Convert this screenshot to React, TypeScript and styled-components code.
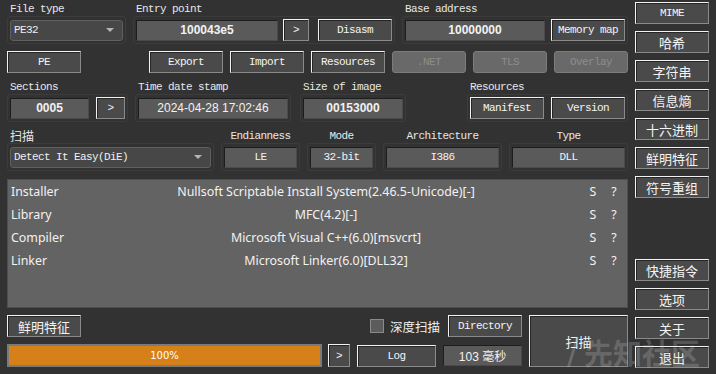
import React from 'react';
import styled, { createGlobalStyle } from 'styled-components';

const GlobalStyle = createGlobalStyle`
  html, body {
    margin: 0;
    padding: 0;
    background: #323232;
  }
`;

const MONO = `"Liberation Mono", "Noto Sans CJK SC", monospace`;
const SANS = `"Noto Sans", "Noto Sans CJK SC", sans-serif`;
const CJK = `"Noto Sans CJK SC", "Noto Sans", sans-serif`;

const Window = styled.div`
  position: relative;
  width: 716px;
  height: 374px;
  box-sizing: border-box;
  padding-left: 7px;
  display: flex;
  gap: 7px;
  background: #323232;
  overflow: hidden;
  color: #ececec;
`;

const Main = styled.div`
  width: 621px;
  padding-top: 2px;
  display: flex;
  flex-direction: column;
`;

const Side = styled.div`
  width: 74px;
  box-sizing: border-box;
  padding: 2px 0 6px;
  display: flex;
  flex-direction: column;
  justify-content: space-between;
`;

const SideGroup = styled.div`
  display: flex;
  flex-direction: column;
  gap: 7px;
`;

const Row = styled.div<{ $top?: number }>`
  display: flex;
  align-items: flex-start;
  margin-top: ${p => p.$top ?? 0}px;
`;

const Stack = styled.div<{ $left?: number }>`
  display: flex;
  flex-direction: column;
  margin-left: ${p => p.$left ?? 0}px;
`;

const Caption = styled.div<{ $center?: boolean }>`
  height: 14px;
  line-height: 14px;
  padding-left: ${p => (p.$center ? 0 : 3)}px;
  text-align: ${p => (p.$center ? 'center' : 'left')};
  font-family: ${MONO};
  font-size: 11px;
  letter-spacing: -0.6px;
  color: #e8e8e8;
  white-space: nowrap;
`;

const CjkCaption = styled(Caption)`
  font-family: ${CJK};
  font-size: 12px;
  letter-spacing: 0;
`;

const Group = styled.div`
  display: flex;
  align-items: center;
  border: 1px solid #3c3c3c;
  border-radius: 3px;
  padding: 2px;
  height: 22px;
`;

const Field = styled.div<{ $w: number; $bold?: boolean; $mono?: boolean; $ml?: number }>`
  width: ${p => p.$w}px;
  height: 21px;
  box-sizing: border-box;
  margin-left: ${p => p.$ml ?? 0}px;
  background: #5a5a5a;
  border: 1px solid #1d1d1d;
  border-right-color: #4a4a4a;
  border-bottom-color: #4a4a4a;
  display: flex;
  align-items: center;
  justify-content: center;
  color: #f2f2f2;
  white-space: nowrap;
  font-family: ${p => (p.$mono ? MONO : `"Liberation Sans", "Noto Sans CJK SC", sans-serif`)};
  font-size: ${p => (p.$mono ? 11 : 12)}px;
  letter-spacing: ${p => (p.$mono ? -0.6 : 0)}px;
  font-weight: ${p => (p.$bold ? 700 : 400)};
`;

const Btn = styled.div<{ $w?: number; $h?: number; $ml?: number; $cjk?: boolean }>`
  width: ${p => p.$w ?? 74}px;
  height: ${p => p.$h ?? 22}px;
  margin-left: ${p => p.$ml ?? 0}px;
  box-sizing: border-box;
  flex-shrink: 0;
  background: #4a4a4a;
  border: 1px solid #f2f2f2;
  border-right-color: #8a8a8a;
  border-bottom-color: #8a8a8a;
  box-shadow: inset 1px 1px 0 #262626;
  display: flex;
  align-items: center;
  justify-content: center;
  color: #f4f4f4;
  white-space: nowrap;
  font-family: ${p => (p.$cjk ? CJK : MONO)};
  font-size: ${p => (p.$cjk ? 13 : 11)}px;
  letter-spacing: ${p => (p.$cjk ? 0 : -0.6)}px;
`;

const DisabledBtn = styled.div<{ $ml?: number }>`
  width: 74px;
  height: 22px;
  margin-left: ${p => p.$ml ?? 0}px;
  box-sizing: border-box;
  background: #696969;
  border: 1px solid #7c7c7c;
  border-radius: 3px;
  display: flex;
  align-items: center;
  justify-content: center;
  color: #8d8d8d;
  font-family: ${MONO};
  font-size: 11px;
  letter-spacing: -0.6px;
`;

const Combo = styled.div<{ $w: number }>`
  width: ${p => p.$w}px;
  height: 21px;
  box-sizing: border-box;
  background: #474747;
  border: 1px solid #5f5f5f;
  border-radius: 3px;
  display: flex;
  align-items: center;
  justify-content: space-between;
  padding: 0 8px 0 3px;
  font-family: ${MONO};
  font-size: 11px;
  letter-spacing: -0.6px;
  color: #f0f0f0;
  white-space: nowrap;
`;

const Arrow = styled.span`
  width: 0;
  height: 0;
  border-left: 4px solid transparent;
  border-right: 4px solid transparent;
  border-top: 4px solid #b5b5b5;
`;

const Panel = styled.div`
  margin-top: 8px;
  height: 129px;
  box-sizing: border-box;
  background: #636363;
  border: 1px solid #4e4e4e;
  padding: 0 0 0 3px;
`;

const ResultRow = styled.div`
  display: grid;
  grid-template-columns: 60px 510px 24px 18px;
  height: 23px;
  align-items: center;
  font-family: ${SANS};
  font-size: 12.4px;
  color: #f2f2f2;
  white-space: nowrap;
`;

const Cell = styled.span<{ $center?: boolean }>`
  text-align: ${p => (p.$center ? 'center' : 'left')};
`;

const Bottom = styled.div`
  display: flex;
  margin-top: 7px;
`;

const BottomLeft = styled.div`
  width: 515px;
  display: flex;
  flex-direction: column;
  gap: 7px;
`;

const BottomRow = styled.div`
  display: flex;
  align-items: center;
`;

const Check = styled.span`
  width: 14px;
  height: 14px;
  box-sizing: border-box;
  margin-left: auto;
  background: #5c5c5c;
  border: 1px solid #8a8a8a;
`;

const CheckLabel = styled.span`
  margin-left: 6px;
  font-family: ${CJK};
  font-size: 12.5px;
  color: #f0f0f0;
`;

const Progress = styled.div`
  width: 315px;
  height: 23px;
  box-sizing: border-box;
  border: 2px solid #7a7a7a;
  background: #d6801a;
  display: flex;
  align-items: center;
  justify-content: center;
  font-family: "DejaVu Sans", sans-serif;
  font-size: 10px;
  color: #ffffff;
`;

const Watermark = styled.div`
  position: absolute;
  right: 16px;
  bottom: 1px;
  display: flex;
  align-items: center;
  gap: 2px;
  pointer-events: none;
  color: rgba(210, 210, 210, 0.24);
  font-family: ${CJK};
  font-size: 29px;
  font-weight: 700;
`;

const results = [
  ['Installer', 'Nullsoft Scriptable Install System(2.46.5-Unicode)[-]'],
  ['Library', 'MFC(4.2)[-]'],
  ['Compiler', 'Microsoft Visual C++(6.0)[msvcrt]'],
  ['Linker', 'Microsoft Linker(6.0)[DLL32]'],
];

const sideTop = ['MIME', '哈希', '字符串', '信息熵', '十六进制', '鲜明特征', '符号重组'];
const sideBottom = ['快捷指令', '选项', '关于', '退出'];

export default function App() {
  return (
    <Window>
      <GlobalStyle />
      <Main>
        <Row>
          <Stack>
            <Caption>File type</Caption>
            <Group>
              <Combo $w={113}>
                PE32
                <Arrow />
              </Combo>
            </Group>
          </Stack>
          <Stack $left={7}>
            <Caption>Entry point</Caption>
            <Group>
              <Field $w={142} $bold>100043e5</Field>
              <Btn $w={26} $ml={5}>&gt;</Btn>
              <Btn $ml={9}>Disasm</Btn>
            </Group>
          </Stack>
          <Stack $left={7}>
            <Caption>Base address</Caption>
            <Group>
              <Field $w={140} $bold>10000000</Field>
              <Btn $ml={6}>Memory map</Btn>
            </Group>
          </Stack>
        </Row>

        <Row $top={7}>
          <Btn>PE</Btn>
          <Btn $ml={68}>Export</Btn>
          <Btn $ml={7}>Import</Btn>
          <Btn $ml={7}>Resources</Btn>
          <DisabledBtn $ml={7}>.NET</DisabledBtn>
          <DisabledBtn $ml={7}>TLS</DisabledBtn>
          <DisabledBtn $ml={7}>Overlay</DisabledBtn>
        </Row>

        <Row $top={7}>
          <Stack>
            <Caption>Sections</Caption>
            <Group>
              <Field $w={79} $bold>0005</Field>
              <Btn $w={29} $ml={7}>&gt;</Btn>
            </Group>
          </Stack>
          <Stack $left={7}>
            <Caption>Time date stamp</Caption>
            <Group>
              <Field $w={150}>2024-04-28 17:02:46</Field>
            </Group>
          </Stack>
          <Stack $left={9}>
            <Caption>Size of image</Caption>
            <Group>
              <Field $w={100} $bold>00153000</Field>
            </Group>
          </Stack>
          <Stack $left={61}>
            <Caption>Resources</Caption>
            <Group>
              <Btn>Manifest</Btn>
              <Btn $ml={7}>Version</Btn>
            </Group>
          </Stack>
        </Row>

        <Row $top={7}>
          <Stack>
            <CjkCaption>扫描</CjkCaption>
            <Group>
              <Combo $w={201}>
                Detect It Easy(DiE)
                <Arrow />
              </Combo>
            </Group>
          </Stack>
          <Stack $left={7}>
            <Caption $center>Endianness</Caption>
            <Group>
              <Field $w={73} $mono>LE</Field>
            </Group>
          </Stack>
          <Stack $left={7}>
            <Caption $center>Mode</Caption>
            <Group>
              <Field $w={63} $mono>32-bit</Field>
            </Group>
          </Stack>
          <Stack $left={7}>
            <Caption $center>Architecture</Caption>
            <Group>
              <Field $w={113} $mono>I386</Field>
            </Group>
          </Stack>
          <Stack $left={7}>
            <Caption $center>Type</Caption>
            <Group>
              <Field $w={113} $mono>DLL</Field>
            </Group>
          </Stack>
        </Row>

        <Panel>
          {results.map(([kind, name]) => (
            <ResultRow key={kind}>
              <Cell>{kind}</Cell>
              <Cell $center>{name}</Cell>
              <Cell $center>S</Cell>
              <Cell $center>?</Cell>
            </ResultRow>
          ))}
        </Panel>

        <Bottom>
          <BottomLeft>
            <BottomRow>
              <Btn $cjk>鲜明特征</Btn>
              <Check />
              <CheckLabel>深度扫描</CheckLabel>
              <Btn $ml={8}>Directory</Btn>
            </BottomRow>
            <BottomRow>
              <Progress>100%</Progress>
              <Btn $w={22} $h={23} $ml={6}>&gt;</Btn>
              <Btn $w={79} $ml={7}>Log</Btn>
              <Field $w={79} $ml={7}>103 毫秒</Field>
            </BottomRow>
          </BottomLeft>
          <Btn $w={99} $h={52} $ml={7} $cjk>扫描</Btn>
        </Bottom>
      </Main>

      <Side>
        <SideGroup>
          {sideTop.map(t => (
            <Btn key={t} $cjk={t !== 'MIME'}>{t}</Btn>
          ))}
        </SideGroup>
        <SideGroup>
          {sideBottom.map(t => (
            <Btn key={t} $cjk>{t}</Btn>
          ))}
        </SideGroup>
      </Side>

      <Watermark>
        <svg width="18" height="36" viewBox="0 0 18 36">
          <path d="M12 3 L3 33 L6 33 L15 3 Z" fill="currentColor" />
        </svg>
        先知社区
      </Watermark>
    </Window>
  );
}
